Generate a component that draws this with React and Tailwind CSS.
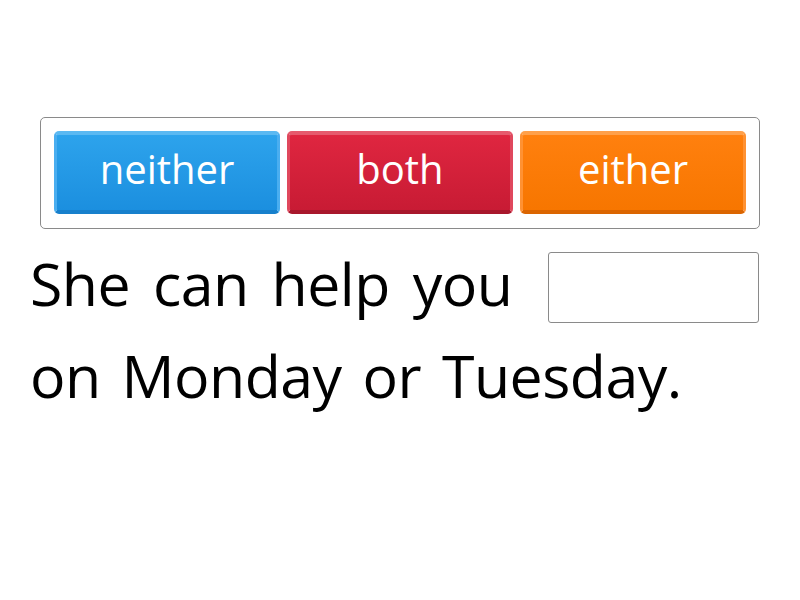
import React from 'react';

const words = [
  {
    label: 'neither',
    cls: 'bg-gradient-to-b from-[#2da3ec] to-[#1b8fdf] border-t-[#5bb9f2] border-x-[#4aaef0] border-b-[#1780cc]',
  },
  {
    label: 'both',
    cls: 'bg-gradient-to-b from-[#df2640] to-[#c81b34] border-t-[#e65a6d] border-x-[#e0485d] border-b-[#a8172c]',
  },
  {
    label: 'either',
    cls: 'bg-gradient-to-b from-[#ff800e] to-[#f77600] border-t-[#ffa04a] border-x-[#ff9233] border-b-[#db6500]',
  },
];

const WordTile = ({ word }) => (
  <div
    className={`flex-1 h-[83px] rounded-[5px] border-t-[4px] border-x-[3px] border-b-[4px] flex items-center justify-center text-white text-[40px] font-medium ${word.cls}`}
  >
    <span className="-mt-[8px]">{word.label}</span>
  </div>
);

export default function App() {
  return (
    <div
      className="w-[800px] h-[600px] bg-white text-black overflow-hidden"
      style={{ fontFamily: '"Open Sans", "Noto Sans", sans-serif' }}
    >
      <div className="pt-[117px] pl-[40px] pr-[40px]">
        <div className="border border-[#8a8a8a] rounded-[5px] px-[13px] pt-[13px] pb-[14px] flex gap-[7px]">
          {words.map((w) => (
            <WordTile key={w.label} word={w} />
          ))}
        </div>
      </div>

      <div className="pl-[30px] pr-[41px] mt-[23px] text-[59px] leading-[93px] tracking-[-0.5px]">
        <div className="flex items-start justify-between">
          <span className="-mt-[15px] [word-spacing:8px]">She can help you</span>
          <div className="w-[211px] h-[71px] border border-[#8a8a8a] rounded-[3px] bg-white" />
        </div>
        <div className="-mt-[1px] [word-spacing:6px]">on Monday or Tuesday.</div>
      </div>
    </div>
  );
}
